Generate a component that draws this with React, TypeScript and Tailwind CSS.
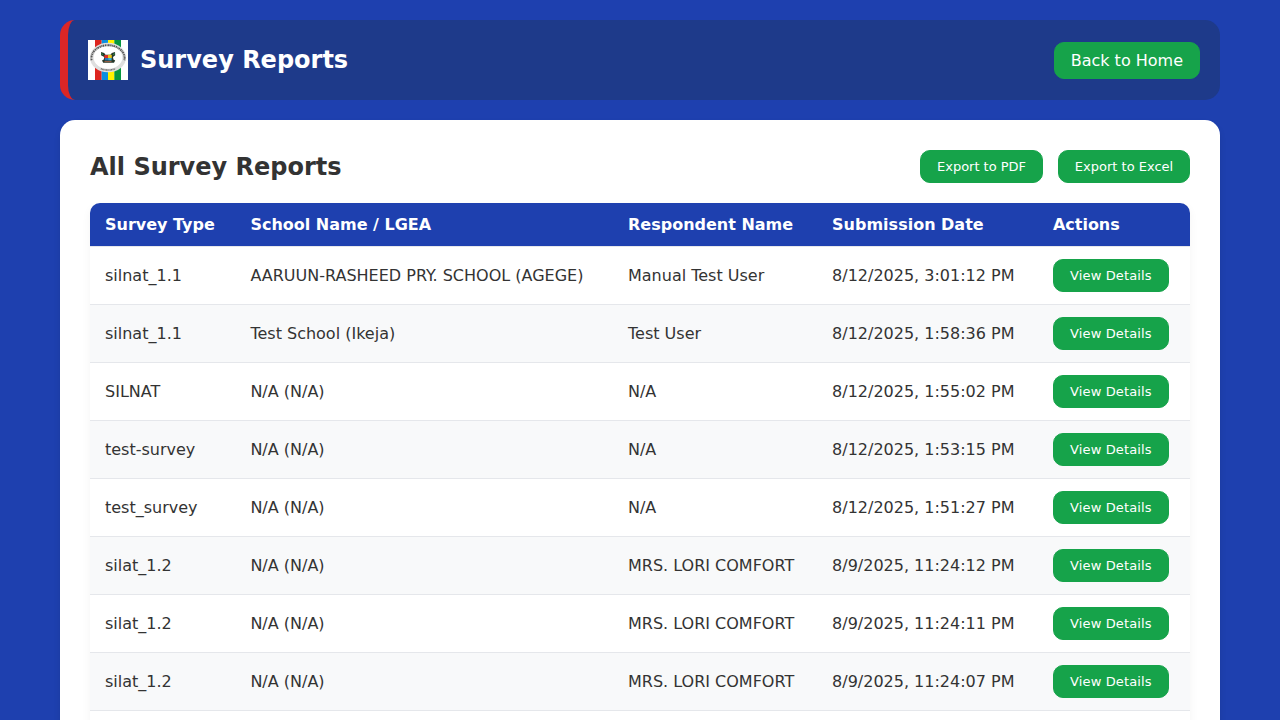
const font = "font-['DejaVu_Sans',sans-serif]";

const rows: [string, string, string, string][] = [
  ['silnat_1.1', 'AARUUN-RASHEED PRY. SCHOOL (AGEGE)', 'Manual Test User', '8/12/2025, 3:01:12 PM'],
  ['silnat_1.1', 'Test School (Ikeja)', 'Test User', '8/12/2025, 1:58:36 PM'],
  ['SILNAT', 'N/A (N/A)', 'N/A', '8/12/2025, 1:55:02 PM'],
  ['test-survey', 'N/A (N/A)', 'N/A', '8/12/2025, 1:53:15 PM'],
  ['test_survey', 'N/A (N/A)', 'N/A', '8/12/2025, 1:51:27 PM'],
  ['silat_1.2', 'N/A (N/A)', 'MRS. LORI COMFORT', '8/9/2025, 11:24:12 PM'],
  ['silat_1.2', 'N/A (N/A)', 'MRS. LORI COMFORT', '8/9/2025, 11:24:11 PM'],
  ['silat_1.2', 'N/A (N/A)', 'MRS. LORI COMFORT', '8/9/2025, 11:24:07 PM'],
];

function SmallButton({ children, className }: { children: string; className: string }) {
  return (
    <button
      className={`${className} block whitespace-nowrap rounded-[10px] border border-[#16a34a] bg-[#16a34a] py-2 text-center text-[13px] leading-[15px] text-white`}
    >
      {children}
    </button>
  );
}

function Logo() {
  return (
    <svg className="block h-10 w-10" viewBox="0 0 40 40" role="img" aria-label="Logo">
      <rect width="40" height="40" fill="#fff" />
      <rect x="7" width="6.7" height="40" fill="#dd251f" />
      <rect x="13.7" width="6.3" height="40" fill="#0b8fe0" />
      <rect x="20" width="6.3" height="40" fill="#fff200" />
      <rect x="26.3" width="6.7" height="40" fill="#06963f" />
      <ellipse cx="20" cy="17.5" rx="18" ry="14.8" fill="#dedede" />
      <ellipse cx="20" cy="17.5" rx="14.4" ry="11.2" fill="#fff" />
      <path
        d="M3.6 20.2 A16.6 13 0 1 1 36.4 20.2"
        fill="none"
        stroke="#555"
        strokeWidth="1.9"
        strokeDasharray="1.3 .6 .8 .5 1.6 .7"
      />
      <path
        d="M12.8 28.8 Q20 31.4 27.2 28.8"
        fill="none"
        stroke="#666"
        strokeWidth="1.5"
        strokeDasharray="1 .5 .7 .4"
      />
      <path
        d="M13 12l3.2 1 1.3 1.8h5l1.3-1.8 3.2-1 .2 3.2-2.2 1.8.4 2.4 1.8 1.2-1.2 2.2H15.2L14 20.6l1.8-1.2.4-2.4-3.2-1.8z"
        fill="#26382b"
      />
      <path d="M16.3 15h3.7v3.1h-3.7z" fill="#d92c24" />
      <path d="M20 14.8h3.8v3.3H20z" fill="#e5c51d" />
      <path d="M16.8 18h3.4v2.4h-3.4z" fill="#2875b8" />
      <path d="M20.2 18h3.4v2.4h-3.4z" fill="#3bafdc" />
      <path d="M13 13.6l2 1M27 13.6l-2 1" stroke="#2f914b" strokeWidth="1" />
      <path d="M16.5 21.6h7" stroke="#c26b4c" strokeWidth=".8" />
    </svg>
  );
}

export default function App() {
  return (
    <div className={`${font} h-[720px] overflow-hidden bg-[#1e40af] px-[60px] pt-5 text-base text-[#333]`}>
      <header className="mb-5 flex h-20 items-center justify-between rounded-[15px] border-l-8 border-[#dc2626] bg-[#1e3a8a] px-5">
        <div className="flex items-center gap-3">
          <Logo />
          <h1 className="text-2xl leading-7 font-bold text-white">Survey Reports</h1>
        </div>
        <a className="mt-px block rounded-[10px] border border-[#16a34a] bg-[#16a34a] px-4 py-2 leading-[19px] text-white">
          Back to Home
        </a>
      </header>

      <main className="h-[800px] rounded-[15px] bg-white p-[30px] shadow-[0_4px_6px_rgba(0,0,0,0.1)]">
        <div className="mb-5 flex h-[33px] items-center justify-between">
          <h2 className="text-2xl leading-7 font-bold">All Survey Reports</h2>
          <div className="flex gap-[15px]">
            <SmallButton className="w-[123px] tracking-[-0.03px]">Export to PDF</SmallButton>
            <SmallButton className="w-[132px]">Export to Excel</SmallButton>
          </div>
        </div>

        <div className="h-[600px] overflow-hidden rounded-[10px] shadow-[0_4px_10px_rgba(0,0,0,0.05)]">
          <table className="w-full table-fixed border-separate border-spacing-0 text-left whitespace-nowrap">
            <colgroup>
              <col className="w-[145.4px]" />
              <col className="w-[377.6px]" />
              <col className="w-[204.1px]" />
              <col className="w-[220.8px]" />
              <col className="w-[152.1px]" />
            </colgroup>
            <thead>
              <tr className="bg-[#1e40af] leading-[19px] text-white">
                {['Survey Type', 'School Name / LGEA', 'Respondent Name', 'Submission Date', 'Actions'].map((h) => (
                  <th key={h} className="border-b border-[#e5e7eb] px-[15px] py-3 font-bold">{h}</th>
                ))}
              </tr>
            </thead>
            <tbody>
              {rows.map((row, i) => (
                <tr key={i} className="bg-white leading-[19px] even:bg-[#f8f9fa]">
                  {row.map((cell, j) => (
                    <td key={j} className="border-b border-[#e5e7eb] px-[15px] py-3">{cell}</td>
                  ))}
                  <td className="border-b border-[#e5e7eb] px-[15px] py-3">
                    <SmallButton className="w-[116px] tracking-[0.14px]">View Details</SmallButton>
                  </td>
                </tr>
              ))}
            </tbody>
          </table>
        </div>
      </main>
    </div>
  );
}
